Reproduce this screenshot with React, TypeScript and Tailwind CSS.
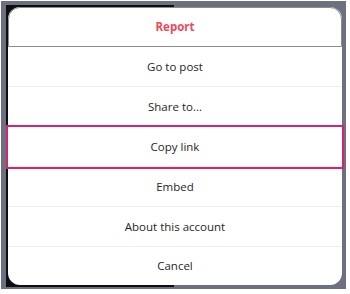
import React from "react";

const rows = ["Go to post", "Share to...", "Copy link", "Embed", "About this account"];

export default function App() {
  return (
    <div
      className="w-[350px] h-[294px] bg-white pl-[1px] pt-[1px]"
      style={{ fontFamily: '"Open Sans", "Noto Sans", sans-serif' }}
    >
      <div className="w-[345px] h-[288px] bg-[#6d7080] pl-[5px] pt-[4px]">
        <div className="w-[337px] h-[282px] bg-[linear-gradient(to_right,#0c0f10_50%,#6d7080_50%)] pl-[2px] pt-[2px]">
          <div className="w-[334px] h-[278px] bg-white rounded-[12px] flex flex-col">
            <button className="h-[40px] shrink-0 border border-[#8c8c8c] rounded-t-[12px] text-[#ed4956] font-bold text-[11.5px] flex items-center justify-center">
              Report
            </button>
            {rows.map((r) => (
              <button
                key={r}
                className={
                  r === "Copy link"
                    ? "relative z-10 h-[40px] shrink-0 border-b border-[#efefef] outline-2 outline-[#d6246e] text-[#262626] text-[11.5px] flex items-center justify-center"
                    : "h-[40px] shrink-0 border-b border-[#efefef] text-[#262626] text-[11.5px] flex items-center justify-center"
                }
              >
                {r}
              </button>
            ))}
            <button className="flex-1 rounded-b-[12px] text-[#262626] text-[11.5px] flex items-center justify-center">
              Cancel
            </button>
          </div>
        </div>
      </div>
    </div>
  );
}
